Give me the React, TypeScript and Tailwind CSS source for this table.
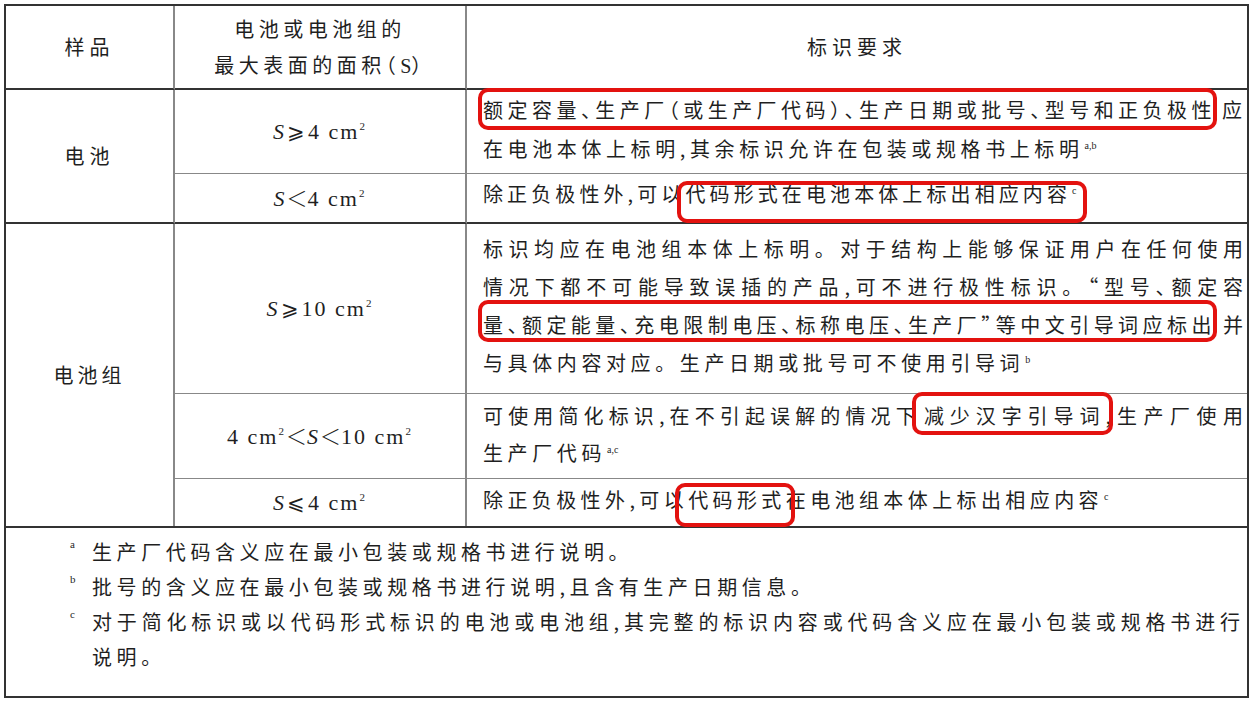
import React from "react";

const PUNCT = "、（）“”";

function t(s: string): React.ReactNode[] {
  const out: React.ReactNode[] = [];
  let buf = "";
  Array.from(s).forEach((ch, i) => {
    if (PUNCT.includes(ch)) {
      if (buf) out.push(buf);
      buf = "";
      out.push(
        <span key={i} className="[font-feature-settings:'halt']">
          {ch}
        </span>
      );
    } else {
      buf += ch;
    }
  });
  if (buf) out.push(buf);
  return out;
}

const Sup = ({ children }: { children: React.ReactNode }) => (
  <span className="relative -top-[8px] ml-[1px] text-[10px] tracking-normal font-['Liberation_Serif','DejaVu_Serif',serif]">
    {children}
  </span>
);

const J = ({ s, children }: { s?: string; children?: React.ReactNode }) => (
  <div className="text-justify [text-align-last:justify] tracking-normal">{s ? t(s) : children}</div>
);

const N = ({ children, cls = "tracking-[4.6px]" }: { children: React.ReactNode; cls?: string }) => (
  <div className={"whitespace-nowrap " + cls}>{children}</div>
);

const F = ({ children }: { children: React.ReactNode }) => (
  <span className="font-['Liberation_Serif','DejaVu_Serif',serif] text-[22px] tracking-[2px] whitespace-nowrap">
    {children}
  </span>
);

const S = () => <span className="italic">S</span>;

const Sq = () => <span className="relative -top-[9px] text-[11px]">2</span>;

const Ge = () => <span className="font-['DejaVu_Serif',serif] text-[21px] mx-[1px]">⩾</span>;
const Le = () => <span className="font-['DejaVu_Serif',serif] text-[21px] mx-[1px]">⩽</span>;
const Lt = () => (
  <span className="font-['Noto_Sans_CJK_SC',sans-serif] font-light text-[21px] tracking-normal">＜</span>
);

const Box = ({ cls }: { cls: string }) => (
  <div className={"absolute border-[4px] border-[#e3120f] rounded-[10px] pointer-events-none " + cls} />
);

export default function App() {
  return (
    <div className="relative w-[1253px] h-[702px] bg-white pt-[4px] pl-[4px] text-[20px] text-[#1f1f1f] font-['Noto_Sans_CJK_SC','Noto_Sans_CJK_JP',sans-serif]">
      <div className="w-[1245px] h-[694px] border-2 border-[#333] flex flex-col">
        <div className="grid grid-cols-[169px_292px_1fr] grid-rows-[84px_84px_50px_170px_85px_47px]">
          {/* header */}
          <div className="border-r-2 border-r-[#888] border-b-2 border-b-[#333] flex items-center justify-center tracking-[5px]">
            样品
          </div>
          <div className="border-r-2 border-r-[#888] border-b-2 border-b-[#333] flex flex-col items-center justify-center leading-[36px] tracking-[4.5px]">
            <div>电池或电池组的</div>
            <div>
              最大表面的面积<span className="[font-feature-settings:'halt']">（</span>
              <span className="font-['Liberation_Serif',serif] tracking-normal">S</span>
              <span className="[font-feature-settings:'halt']">）</span>
            </div>
          </div>
          <div className="border-b-2 border-b-[#333] flex items-center justify-center tracking-[5px]">
            标识要求
          </div>

          {/* 电池 */}
          <div className="row-span-2 border-r-2 border-r-[#888] border-b-2 border-b-[#333] flex items-center justify-center tracking-[5px]">
            电池
          </div>
          <div className="border-r-2 border-r-[#888] border-b border-b-[#888] flex items-center justify-center">
            <F>
              <S />
              <Ge />4 cm<Sq />
            </F>
          </div>
          <div className="border-b border-b-[#888] flex flex-col justify-center pl-[16px] pr-[5px] leading-[39px]">
            <J>
              {t("额定容量、生产厂（或生产厂代码）、生产日期或批号、型号和正负极性")}
              <span className="ml-[6px]">应</span>
            </J>
            <N>
              在电池本体上标明,其余标识允许在包装或规格书上标明<Sup>a,b</Sup>
            </N>
          </div>
          <div className="border-r-2 border-r-[#888] border-b-2 border-b-[#333] flex items-center justify-center">
            <F>
              <S />
              <Lt />4 cm<Sq />
            </F>
          </div>
          <div className="border-b-2 border-b-[#333] flex flex-col justify-center pl-[16px] pr-[5px] leading-[38px] pb-[4px]">
            <N cls="tracking-[4.1px]">
              除正负极性外,可以代码形式在电池本体上标出相应内容<Sup>c</Sup>
            </N>
          </div>

          {/* 电池组 */}
          <div className="row-span-3 border-r-2 border-r-[#888] flex items-center justify-center tracking-[4px]">
            电池组
          </div>
          <div className="border-r-2 border-r-[#888] border-b border-b-[#888] flex items-center justify-center">
            <F>
              <S />
              <Ge />10 cm<Sq />
            </F>
          </div>
          <div className="border-b border-b-[#888] flex flex-col justify-center pl-[16px] pr-[4px] leading-[38px]">
            <J s="标识均应在电池组本体上标明。对于结构上能够保证用户在任何使用" />
            <J s="情况下都不可能导致误插的产品,可不进行极性标识。“型号、额定容" />
            <J>
              {t("量、额定能量、充电限制电压、标称电压、生产厂”等中文引导词应标出")}
              <span className="ml-[7px]">并</span>
            </J>
            <N>
              与具体内容对应。生产日期或批号可不使用引导词<Sup>b</Sup>
            </N>
          </div>
          <div className="border-r-2 border-r-[#888] border-b border-b-[#888] flex items-center justify-center">
            <F>
              4 cm<Sq />
              <Lt />
              <S />
              <Lt />10 cm<Sq />
            </F>
          </div>
          <div className="border-b border-b-[#888] flex flex-col justify-center pl-[16px] pr-[4px] leading-[37px]">
            <J>
              <span className="tracking-[-1.4px]">可使用简化标识,在不引起误解的情况下</span>
              <span className="ml-[3px] tracking-[-0.6px]">减少汉字引导词,</span>
              <span>生产厂使用</span>
            </J>
            <N>
              生产厂代码<Sup>a,c</Sup>
            </N>
          </div>
          <div className="border-r-2 border-r-[#888] flex items-center justify-center">
            <F>
              <S />
              <Le />4 cm<Sq />
            </F>
          </div>
          <div className="flex flex-col justify-center pl-[16px] pr-[4px] leading-[38px]">
            <N cls="tracking-[4.4px]">
              除正负极性外,可以代码形式在电池组本体上标出相应内容<Sup>c</Sup>
            </N>
          </div>
        </div>

        {/* footnotes */}
        <div className="flex-1 border-t-2 border-t-[#333] pt-[6px] pl-[64px] pr-[7px] leading-[35px] flex flex-col">
          <div className="flex">
            <div className="w-[22px] shrink-0 relative -top-[7px] text-[11px] font-['Liberation_Serif',serif]">a</div>
            <N>生产厂代码含义应在最小包装或规格书进行说明。</N>
          </div>
          <div className="flex">
            <div className="w-[22px] shrink-0 relative -top-[7px] text-[11px] font-['Liberation_Serif',serif]">b</div>
            <N>批号的含义应在最小包装或规格书进行说明,且含有生产日期信息。</N>
          </div>
          <div className="flex">
            <div className="w-[22px] shrink-0 relative -top-[7px] text-[11px] font-['Liberation_Serif',serif]">c</div>
            <div className="flex-1">
              <J s="对于简化标识或以代码形式标识的电池或电池组,其完整的标识内容或代码含义应在最小包装或规格书进行" />
              <N>说明。</N>
            </div>
          </div>
        </div>
      </div>

      <Box cls="left-[478px] top-[88px] w-[739px] h-[42px]" />
      <Box cls="left-[677px] top-[181px] w-[410px] h-[42px]" />
      <Box cls="left-[478px] top-[300px] w-[739px] h-[42px]" />
      <Box cls="left-[912px] top-[392px] w-[201px] h-[43px]" />
      <Box cls="left-[675px] top-[483px] w-[120px] h-[44px]" />
    </div>
  );
}
